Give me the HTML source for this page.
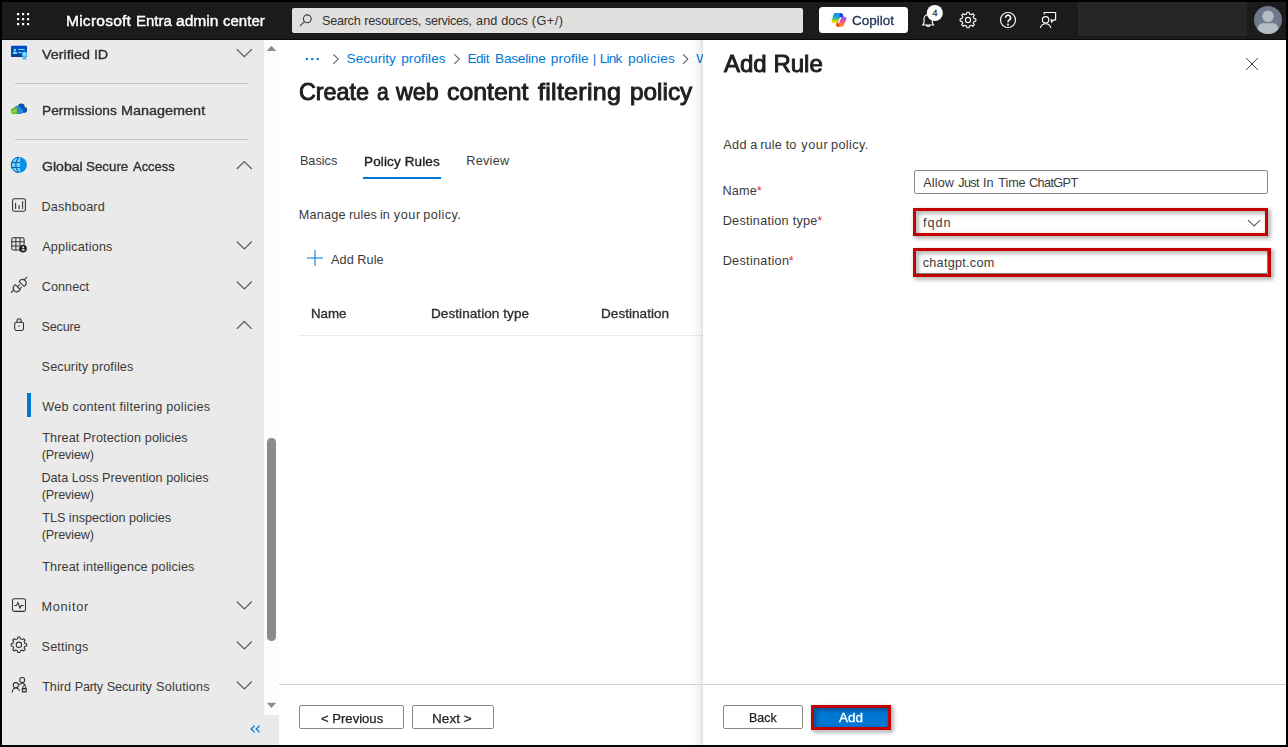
<!DOCTYPE html>
<html lang="en">
<head>
<meta charset="utf-8">
<title>Microsoft Entra admin center</title>
<style>
*{box-sizing:border-box;margin:0;padding:0}
html,body{width:1288px;height:747px;overflow:hidden;background:#000}
body{font-family:"Liberation Sans",sans-serif;font-size:13px;color:#323130;position:relative}
.a{position:absolute}
.t{position:absolute;white-space:nowrap;line-height:1}
svg{position:absolute;overflow:visible}
#white{left:2px;top:2px;width:1284px;height:743px;background:#fff}
#hdr{left:2px;top:2px;width:1284px;height:38px;background:#1b1b1b;border-bottom:1px solid #0a0a0a}
#search{left:292px;top:7.5px;width:511px;height:25.2px;background:#e2e0de;border-radius:2px}
#copilot{left:819px;top:6.7px;width:89.2px;height:26.2px;background:#fff;border-radius:3.5px}
#acct{left:1078px;top:2px;width:169px;height:34px;background:#262626}
#side{left:2px;top:40px;width:277px;height:705px;background:#eaeaea}
#track{left:264px;top:40px;width:15px;height:674.5px;background:#fcfcfc}
#thumb{left:267.4px;top:438px;width:8.6px;height:203.4px;background:#8b8b8b;border-radius:4.3px}
.hr{height:1px;background:#c8c6c4}
#sel{left:27px;top:393px;width:4px;height:24px;background:#0078d4}
#tabline{left:363px;top:177px;width:78px;height:2px;background:#0078d4}
#tblline{left:299px;top:335px;width:404px;height:1px;background:#edebe9}
#footline{left:279px;top:684px;width:1007px;height:1px;background:#d2d0ce}
#pshadow{left:687px;top:40px;width:16px;height:705px;background:linear-gradient(to right,rgba(0,0,0,0) 0%,rgba(0,0,0,.015) 45%,rgba(0,0,0,.05) 80%,rgba(0,0,0,.12) 100%)}
#panel{left:703px;top:40px;width:583px;height:705px;background:#fff}
.inp{background:#fff;border:1px solid #8a8886;border-radius:2px}
.red{border:3px solid #c40000;filter:drop-shadow(2.5px 2.5px 2px rgba(0,0,0,.45))}
.btn{border:1px solid #8a8886;border-radius:2px;background:#fff}
</style>
</head>
<body>
<div class="a" id="white"></div>

<!-- main content (under panel) -->
<div class="a" id="tabline"></div>
<div class="a" id="tblline"></div>
<svg width="720" height="300" viewBox="0 0 720 300" style="left:0;top:0">
  <g fill="#0078d4"><rect x="305.9" y="58" width="2.1" height="2.1"/><rect x="311.2" y="58" width="2.1" height="2.1"/><rect x="316.7" y="58" width="2.1" height="2.1"/></g>
  <g fill="none" stroke="#605e5c" stroke-width="1.05">
    <path d="M333.3 54.3 L338.2 59.05 L333.3 63.8"/>
    <path d="M454.4 54.3 L459.3 59.05 L454.4 63.8"/>
    <path d="M683 54.3 L687.9 59.05 L683 63.8"/>
  </g>
  <path d="M315 250 L315 266 M307 258 L323 258" fill="none" stroke="#0078d4" stroke-width="1.05"/>
</svg>
<span class="t" style="left:696.3px;top:52.4px;font-size:13.65px;color:#0078d4">Web content filtering policies</span>


<!-- header -->
<div class="a" id="hdr"></div>
<div class="a" id="search"></div>
<div class="a" id="copilot"></div>
<div class="a" id="acct"></div>
<svg width="1288" height="42" viewBox="0 0 1288 42" style="left:0;top:0">
  <defs>
    <linearGradient id="cpL" x1="0" y1="0" x2="0" y2="1">
      <stop offset="0" stop-color="#1a8ff5"/><stop offset=".35" stop-color="#16a5d8"/><stop offset=".65" stop-color="#4fc46a"/><stop offset="1" stop-color="#f2d100"/>
    </linearGradient>
    <linearGradient id="cpR" x1="0" y1="0" x2="0" y2="1">
      <stop offset="0" stop-color="#9d55f7"/><stop offset=".45" stop-color="#ec4f8f"/><stop offset="1" stop-color="#ff8a2a"/>
    </linearGradient>
  </defs>
  <!-- waffle -->
  <g fill="#fff">
    <rect x="17" y="13" width="2.2" height="2.2"/><rect x="22" y="13" width="2.2" height="2.2"/><rect x="27" y="13" width="2.2" height="2.2"/>
    <rect x="17" y="18" width="2.2" height="2.2"/><rect x="22" y="18" width="2.2" height="2.2"/><rect x="27" y="18" width="2.2" height="2.2"/>
    <rect x="17" y="23" width="2.2" height="2.2"/><rect x="22" y="23" width="2.2" height="2.2"/><rect x="27" y="23" width="2.2" height="2.2"/>
  </g>
  <!-- search icon -->
  <g fill="none" stroke="#3b3a39" stroke-width="1.1" stroke-linecap="round">
    <circle cx="307.3" cy="18.8" r="3.9"/>
    <path d="M304.5 21.7 L300.2 25.6"/>
  </g>
  <!-- copilot logo -->
  <g stroke-linejoin="round" stroke-width="3">
    <path d="M841.2 15.2 L846 18 L843.5 25 Q843.2 25.6 842.3 25.6 L837.2 25.6 Z" fill="#1447d9" stroke="none" opacity="0"/>
    <path d="M835.3 14.8 L841.3 14.8 L838.2 21.2 L833.2 21.2 Z" fill="url(#cpL)" stroke="url(#cpL)" stroke-width="3.4"/>
    <path d="M840.2 14.2 Q842.6 14.4 843 17.4 L840.6 17.4 Z" fill="#1540d8" stroke="#1540d8" stroke-width="1.2"/>
    <path d="M841.8 18.4 L844.8 18.4 L842 25 L837.6 25 Z" fill="url(#cpR)" stroke="url(#cpR)" stroke-width="3.4"/>
    <path d="M836.4 24 Q836.6 26.3 838.6 26.5 L838.8 24 Z" fill="#ff4a1f" stroke="#ff4a1f" stroke-width="1.2"/>
    <path d="M840.5 17.9 L838.5 22.6" stroke="#fff" stroke-width="1.3" stroke-linecap="round" fill="none"/>
  </g>
  <!-- bell -->
  <g fill="none" stroke="#fff" stroke-width="1.15" stroke-linejoin="round" stroke-linecap="round">
    <path d="M922.6 25 L933.8 25 L932.4 23 L932.4 18.8 A4.2 4.2 0 0 0 924 18.8 L924 23 Z"/>
    <path d="M926.6 25.3 A1.7 1.7 0 0 0 929.8 25.3"/>
  </g>
  <circle cx="934.8" cy="13" r="8" fill="#fff"/>
  <!-- gear -->
  <g fill="none" stroke="#fff" stroke-width="1.1" stroke-linejoin="round">
    <path d="M966.58 14.07 L966.89 12.18 L969.11 12.18 L969.42 14.07 L971.19 14.80 L972.74 13.68 L974.32 15.26 L973.20 16.81 L973.93 18.58 L975.82 18.89 L975.82 21.11 L973.93 21.42 L973.20 23.19 L974.32 24.74 L972.74 26.32 L971.19 25.20 L969.42 25.93 L969.11 27.82 L966.89 27.82 L966.58 25.93 L964.81 25.20 L963.26 26.32 L961.68 24.74 L962.80 23.19 L962.07 21.42 L960.18 21.11 L960.18 18.89 L962.07 18.58 L962.80 16.81 L961.68 15.26 L963.26 13.68 L964.81 14.80 Z"/>
    <circle cx="968" cy="20" r="2.6"/>
  </g>
  <!-- help -->
  <circle cx="1008" cy="20" r="7.5" fill="none" stroke="#fff" stroke-width="1.15"/>
  <path d="M1005.6 17.8 A2.5 2.5 0 1 1 1009.2 20 Q1008 20.7 1008 22.2" fill="none" stroke="#fff" stroke-width="1.6"/>
  <circle cx="1008" cy="24.4" r="1" fill="#fff"/>
  <!-- feedback -->
  <g fill="none" stroke="#fff" stroke-width="1.15" stroke-linejoin="miter">
    <circle cx="1045.6" cy="19.8" r="3.2"/>
    <path d="M1040.4 28 A5.3 5.3 0 0 1 1050.8 28"/>
    <path d="M1044.2 14.6 L1044.2 12.5 L1055.6 12.5 L1055.6 19.8 L1053.8 19.8 L1051.6 22 L1051.6 19.8 L1050.4 19.8"/>
  </g>
  <!-- avatar -->
  <circle cx="1268" cy="20" r="14" fill="#6c7a8c"/>
  <clipPath id="avc"><circle cx="1268" cy="20" r="14"/></clipPath>
  <g clip-path="url(#avc)" fill="#b6bcc3">
    <circle cx="1268" cy="16.3" r="5.8"/>
    <path d="M1257.6 31 Q1257.6 23.2 1262.6 23.2 L1273.4 23.2 Q1278.4 23.2 1278.4 31 L1278.4 36 L1257.6 36 Z"/>
  </g>
</svg>


<!-- sidebar -->
<div class="a" id="side"></div>
<div class="a" id="track"></div>
<div class="a" id="thumb"></div>
<div class="a hr" style="left:15px;top:83px;width:233px"></div>
<div class="a hr" style="left:15px;top:139px;width:233px"></div>
<div class="a" id="sel"></div>
<svg width="280" height="747" viewBox="0 0 280 747" style="left:0;top:0">
<defs>
<linearGradient id="vidg" x1="0" y1="0" x2="0" y2="1"><stop offset="0" stop-color="#0046c7"/><stop offset=".6" stop-color="#0a48b8"/><stop offset="1" stop-color="#0d3a80"/></linearGradient>
<linearGradient id="ribg" x1="0" y1="0" x2="0" y2="1"><stop offset="0" stop-color="#6ad3ff"/><stop offset="1" stop-color="#1ca0f2"/></linearGradient>
<clipPath id="glc"><circle cx="18.9" cy="164.9" r="8"/></clipPath>
</defs>
<path d="M236.8 49.3 L244.3 56.7 L251.8 49.3" fill="none" stroke="#605e5c" stroke-width="1.25"/>
<path d="M236.8 169.0 L244.3 161.60000000000002 L251.8 169.0" fill="none" stroke="#605e5c" stroke-width="1.25"/>
<path d="M236.8 241.5 L244.3 248.89999999999998 L251.8 241.5" fill="none" stroke="#605e5c" stroke-width="1.25"/>
<path d="M236.8 281.5 L244.3 288.9 L251.8 281.5" fill="none" stroke="#605e5c" stroke-width="1.25"/>
<path d="M236.8 328.9 L244.3 321.5 L251.8 328.9" fill="none" stroke="#605e5c" stroke-width="1.25"/>
<path d="M236.8 601.5 L244.3 608.9000000000001 L251.8 601.5" fill="none" stroke="#605e5c" stroke-width="1.25"/>
<path d="M236.8 641.5 L244.3 648.9000000000001 L251.8 641.5" fill="none" stroke="#605e5c" stroke-width="1.25"/>
<path d="M236.8 681.5 L244.3 688.9000000000001 L251.8 681.5" fill="none" stroke="#605e5c" stroke-width="1.25"/>
<path d="M266.8 51 L271.5 45.8 L276.2 51 Z" fill="#8b8b8b"/>
<path d="M266.8 702.8 L271.5 708 L276.2 702.8 Z" fill="#8b8b8b"/>
<path d="M254.6 725.6 L251.2 729 L254.6 732.4 M259.6 725.6 L256.2 729 L259.6 732.4" fill="none" stroke="#0078d4" stroke-width="1.3"/>
<rect x="11" y="45.8" width="16" height="11.1" rx=".7" fill="url(#vidg)"/>
<g fill="#5fe3ff"><circle cx="14.9" cy="49.9" r="1.25"/><path d="M12.5 53.9 Q12.7 51.6 14.9 51.6 Q17.1 51.6 17.3 53.9 Z"/><rect x="18.2" y="48.9" width="6.6" height="1.1"/><rect x="18.2" y="52" width="3.6" height="1.1"/></g>
<path d="M23 55.5 L22.7 60 L24.5 58.9 L26.3 60 L26 55.5 Z" fill="url(#ribg)"/>
<circle cx="24.5" cy="54.3" r="2.7" fill="#4cc2fb"/><circle cx="24.5" cy="54.3" r="1.5" fill="#8fe0ff"/>
<g fill="#0058a8"><circle cx="21.3" cy="106.8" r="3.3"/><circle cx="24.3" cy="109.9" r="2.8"/><rect x="19" y="108" width="5.5" height="4.6"/></g>
<g fill="#2a88e0"><circle cx="17.3" cy="108.7" r="3"/><circle cx="20.3" cy="111.2" r="2.8"/><rect x="14" y="109.5" width="6.5" height="4.5" rx="1"/></g>
<path d="M17 107.9 A3.15 3.15 0 1 0 17 113.9 Z" fill="#6ebf20"/><circle cx="14.2" cy="110.9" r="3.15" fill="#6ebf20" clip-path="none" opacity="0"/>
<path d="M11 110.9 A3.1 3.1 0 0 1 17 109.6 L17 112.2 A3.1 3.1 0 0 1 11 110.9 Z" fill="#6ebf20"/>
<path d="M12.6 111.2 L13.7 112.3 L15.9 109.8" fill="none" stroke="#d6f0b0" stroke-width=".8"/>
<circle cx="18.9" cy="164.9" r="8" fill="#0a8fe8"/>
<g clip-path="url(#glc)"><rect x="10" y="156" width="10.1" height="18" fill="#5fdcff"/><g fill="none" stroke="#2257a8" stroke-width="1.05"><path d="M11 162.5 L20.1 162.5 M11 167.4 L20.1 167.4"/><path d="M18.9 156.9 Q12.6 164.9 18.9 172.9"/></g></g>
<path d="M18.9 157.3 A7.6 7.6 0 0 0 18.9 172.5" fill="none" stroke="#2257a8" stroke-width="1"/>
<g fill="none" stroke="#323130" stroke-width="1.05" stroke-linejoin="round" stroke-linecap="round" stroke="#252423" stroke-width="1.2"><rect x="12.6" y="198.8" width="12.8" height="12.4" rx="1.8"/><path d="M15.6 203.2 L15.6 208.4 M22.6 201.4 L22.6 208.4"/><path d="M19.1 205.2 L19.1 208.9" stroke="#6a6866" stroke-width="1.7" stroke-linecap="butt"/></g>
<g fill="none" stroke="#323130" stroke-width="1.05" stroke-linejoin="round" stroke-linecap="round" stroke-width=".85"><path d="M20.5 250 L13.3 250 Q11.8 250 11.8 248.5 L11.8 239.3 Q11.8 237.8 13.3 237.8 L22.6 237.8 Q24.1 237.8 24.1 239.3 L24.1 244"/><path d="M11.8 241.8 L24.1 241.8 M11.8 245.9 L19.5 245.9 M15.9 237.8 L15.9 250 M20 237.8 L20 245"/></g>
<circle cx="23" cy="248.6" r="3.9" fill="#252423"/><circle cx="23.2" cy="247.3" r="1" fill="#eaeaea"/><path d="M21.6 250.6 Q21.6 248.7 23.2 248.7 Q24.8 248.7 24.8 250.6 Z" fill="#eaeaea"/>
<g fill="none" stroke="#323130" stroke-width="1.05" stroke-linejoin="round" stroke-linecap="round"><path d="M11.3 292.4 L14 289.9 M24 280.2 L26.8 277.4 M17.6 286.6 L19.4 284.8 M19.8 288.8 L21.6 287"/><path d="M15.3 284.7 L20.2 289.7 L18.9 291 Q16.6 292.9 14.3 290.8 L14.1 290.6 Q12 288.3 13.9 286 Z"/><path d="M19.6 282.5 L24.5 287.4 L25.8 286 Q27.7 283.7 25.6 281.4 L25.4 281.2 Q23.1 279.2 20.8 281.1 Z" transform="translate(-0.4,-0.9)"/></g>
<g fill="none" stroke="#323130" stroke-width="1.05" stroke-linejoin="round" stroke-linecap="round"><rect x="14.7" y="322.2" width="8.8" height="8.2" rx="1.6"/><path d="M17 322.2 L17 320.9 A2.1 2.1 0 0 1 21.2 320.9 L21.2 322.2"/></g><rect x="18.5" y="325.6" width="1.2" height="1.2" fill="#323130"/>
<g fill="none" stroke="#323130" stroke-width="1.05" stroke-linejoin="round" stroke-linecap="round"><rect x="12.5" y="598.8" width="13" height="12.6" rx="1.8"/><path d="M14.8 605.4 L16.6 605.4 L17.9 602.4 L20 608.2 L21.2 605.4 L23.2 605.4"/></g>
<g fill="none" stroke="#323130" stroke-width="1.05" stroke-linejoin="round" stroke-linecap="round" stroke-width="1"><path d="M17.48 638.87 L17.80 637.08 L20.00 637.08 L20.32 638.87 L22.09 639.60 L23.58 638.56 L25.14 640.12 L24.10 641.61 L24.83 643.38 L26.62 643.70 L26.62 645.90 L24.83 646.22 L24.10 647.99 L25.14 649.48 L23.58 651.04 L22.09 650.00 L20.32 650.73 L20.00 652.52 L17.80 652.52 L17.48 650.73 L15.71 650.00 L14.22 651.04 L12.66 649.48 L13.70 647.99 L12.97 646.22 L11.18 645.90 L11.18 643.70 L12.97 643.38 L13.70 641.61 L12.66 640.12 L14.22 638.56 L15.71 639.60 Z"/><circle cx="18.9" cy="644.8" r="2.7"/></g>
<g fill="none" stroke="#323130" stroke-width="1.05" stroke-linejoin="round" stroke-linecap="round"><circle cx="22.2" cy="679.9" r="2.5"/><circle cx="15.8" cy="685.2" r="2.6"/><path d="M12.2 692.2 Q12.6 688 15.8 688 Q18.4 688 19.4 690.6"/><path d="M19.6 684.6 Q20.6 683.2 22.2 683.2 Q24.2 683.2 25.2 685.2"/></g>
<rect x="21.8" y="687.8" width="5" height="4.6" rx=".6" fill="#323130"/><rect x="23" y="689.4" width="2.6" height="1.8" fill="#eaeaea"/><path d="M22.9 687.8 L22.9 686.9 A1.4 1.4 0 0 1 25.7 686.9 L25.7 687.8" fill="none" stroke="#323130" stroke-width=".9"/>
</svg>

<!-- panel -->
<div class="a" id="pshadow"></div>
<div class="a" id="panel"></div>
<div class="a" id="footline"></div>
<div class="a btn" style="left:299px;top:705px;width:105px;height:24px"></div>
<div class="a btn" style="left:412px;top:705px;width:82px;height:24px"></div>
<div class="a inp" style="left:914px;top:170px;width:354px;height:23.5px"></div>
<div class="a inp" style="left:914px;top:210px;width:354px;height:24px"></div>
<div class="a inp" style="left:914px;top:250px;width:354px;height:24px"></div>
<div class="a red" style="left:913px;top:208px;width:355px;height:28px"></div>
<div class="a red" style="left:913px;top:248px;width:358px;height:28.8px"></div>
<div class="a btn" style="left:723.3px;top:705px;width:79.5px;height:24px"></div>
<div class="a" style="left:813px;top:707px;width:76px;height:21px;background:#0078d4"></div>
<div class="a red" style="left:811.3px;top:705.3px;width:79.7px;height:24.5px"></div>
<svg width="1288" height="300" viewBox="0 0 1288 300" style="left:0;top:0">
  <path d="M1246.2 58.2 L1257.8 69.8 M1257.8 58.2 L1246.2 69.8" fill="none" stroke="#323130" stroke-width=".95"/>
  <path d="M1248 220.2 L1254.1 226 L1260.2 220.2" fill="none" stroke="#605e5c" stroke-width="1.1"/>
</svg>


<div><span class="t" style="left:66.43px;top:14.0px;font-size:14.625px;color:#ffffff;letter-spacing:0.177px;-webkit-text-stroke:0.39px #ffffff;transform:scaleX(1.0700);transform-origin:0 50%;">Microsoft</span> <span class="t" style="left:135.77px;top:14.0px;font-size:14.625px;color:#ffffff;-webkit-text-stroke:0.39px #ffffff;transform:scaleX(1.0255);transform-origin:0 50%;">Entra</span> <span class="t" style="left:175.92px;top:14.0px;font-size:14.625px;color:#ffffff;-webkit-text-stroke:0.39px #ffffff;transform:scaleX(1.0685);transform-origin:0 50%;">admin</span> <span class="t" style="left:222.96px;top:14.0px;font-size:14.625px;color:#ffffff;-webkit-text-stroke:0.39px #ffffff;transform:scaleX(1.0286);transform-origin:0 50%;">center</span></div>
<div><span class="t" style="left:322.01px;top:15.0px;font-size:12.674999999999999px;color:#323130;letter-spacing:-0.285px;">Search</span> <span class="t" style="left:364.25px;top:15.0px;font-size:12.674999999999999px;color:#323130;letter-spacing:-0.227px;">resources,</span> <span class="t" style="left:425.08px;top:15.0px;font-size:12.674999999999999px;color:#323130;letter-spacing:-0.372px;">services,</span> <span class="t" style="left:476.10px;top:15.0px;font-size:12.674999999999999px;color:#323130;letter-spacing:0.095px;">and</span> <span class="t" style="left:501.21px;top:15.0px;font-size:12.674999999999999px;color:#323130;letter-spacing:-0.070px;">docs</span> <span class="t" style="left:531.76px;top:15.0px;font-size:12.674999999999999px;color:#323130;letter-spacing:0.482px;">(G+/)</span></div>
<div><span class="t" style="left:852.28px;top:15.0px;font-size:12.674999999999999px;color:#243a5e;-webkit-text-stroke:0.34px #243a5e;transform:scaleX(1.0669);transform-origin:0 50%;">Copilot</span></div>
<div><span class="t" style="left:932.18px;top:8.0px;font-size:9.6px;color:#1d3158;-webkit-text-stroke:0.26px #1d3158;">4</span></div>
<div><span class="t" style="left:42.40px;top:48.0px;font-size:13.65px;color:#323130;-webkit-text-stroke:0.37px #323130;transform:scaleX(1.0527);transform-origin:0 50%;">Verified ID</span></div>
<div><span class="t" style="left:41.91px;top:104.0px;font-size:13.65px;color:#323130;-webkit-text-stroke:0.37px #323130;transform:scaleX(1.0066);transform-origin:0 50%;">Permissions</span> <span class="t" style="left:120.68px;top:104.0px;font-size:13.65px;color:#323130;-webkit-text-stroke:0.37px #323130;transform:scaleX(1.0568);transform-origin:0 50%;">Management</span></div>
<div><span class="t" style="left:41.87px;top:160.0px;font-size:13.65px;color:#323130;-webkit-text-stroke:0.37px #323130;transform:scaleX(1.0315);transform-origin:0 50%;">Global</span> <span class="t" style="left:86.44px;top:160.0px;font-size:13.65px;color:#323130;-webkit-text-stroke:0.37px #323130;transform:scaleX(0.9781);transform-origin:0 50%;">Secure</span> <span class="t" style="left:133.10px;top:160.0px;font-size:13.65px;color:#323130;-webkit-text-stroke:0.37px #323130;transform:scaleX(0.9492);transform-origin:0 50%;">Access</span></div>
<div><span class="t" style="left:41.40px;top:201.0px;font-size:12.674999999999999px;color:#3b3a39;letter-spacing:0.186px;">Dashboard</span></div>
<div><span class="t" style="left:42.26px;top:241.0px;font-size:12.674999999999999px;color:#3b3a39;letter-spacing:0.176px;">Applications</span></div>
<div><span class="t" style="left:41.80px;top:281.0px;font-size:12.674999999999999px;color:#3b3a39;letter-spacing:0.033px;">Connect</span></div>
<div><span class="t" style="left:41.61px;top:321.0px;font-size:12.674999999999999px;color:#3b3a39;letter-spacing:-0.254px;">Secure</span></div>
<div><span class="t" style="left:41.61px;top:361.0px;font-size:12.674999999999999px;color:#3b3a39;letter-spacing:0.101px;">Security profiles</span></div>
<div><span class="t" style="left:42.30px;top:401.0px;font-size:12.674999999999999px;color:#3b3a39;letter-spacing:0.242px;">Web content filtering policies</span></div>
<div><span class="t" style="left:42.23px;top:432.0px;font-size:12.674999999999999px;color:#3b3a39;letter-spacing:0.107px;">Threat Protection policies</span></div>
<div><span class="t" style="left:41.66px;top:449.0px;font-size:12.674999999999999px;color:#3b3a39;letter-spacing:-0.129px;">(Preview)</span></div>
<div><span class="t" style="left:41.40px;top:472.0px;font-size:12.674999999999999px;color:#3b3a39;letter-spacing:0.014px;">Data Loss Prevention policies</span></div>
<div><span class="t" style="left:41.66px;top:489.0px;font-size:12.674999999999999px;color:#3b3a39;letter-spacing:-0.129px;">(Preview)</span></div>
<div><span class="t" style="left:42.23px;top:512.0px;font-size:12.674999999999999px;color:#3b3a39;letter-spacing:-0.024px;">TLS inspection policies</span></div>
<div><span class="t" style="left:41.66px;top:529.0px;font-size:12.674999999999999px;color:#3b3a39;letter-spacing:-0.129px;">(Preview)</span></div>
<div><span class="t" style="left:42.23px;top:561.0px;font-size:12.674999999999999px;color:#3b3a39;letter-spacing:0.111px;">Threat intelligence policies</span></div>
<div><span class="t" style="left:41.40px;top:601.0px;font-size:12.674999999999999px;color:#3b3a39;letter-spacing:0.767px;">Monitor</span></div>
<div><span class="t" style="left:41.61px;top:641.0px;font-size:12.674999999999999px;color:#3b3a39;letter-spacing:0.126px;">Settings</span></div>
<div><span class="t" style="left:42.13px;top:681.0px;font-size:12.674999999999999px;color:#3b3a39;letter-spacing:0.016px;">Third</span> <span class="t" style="left:74.80px;top:681.0px;font-size:12.674999999999999px;color:#3b3a39;letter-spacing:-0.316px;">Party</span> <span class="t" style="left:106.72px;top:681.0px;font-size:12.674999999999999px;color:#3b3a39;letter-spacing:-0.079px;">Security</span> <span class="t" style="left:156.12px;top:681.0px;font-size:12.674999999999999px;color:#3b3a39;letter-spacing:0.177px;">Solutions</span></div>
<div><span class="t" style="left:346.60px;top:52.0px;font-size:13.65px;color:#0078d4;">Security</span> <span class="t" style="left:401.21px;top:52.0px;font-size:13.65px;color:#0078d4;letter-spacing:0.064px;">profiles</span></div>
<div><span class="t" style="left:467.39px;top:52.0px;font-size:13.65px;color:#0078d4;letter-spacing:-0.482px;">Edit</span> <span class="t" style="left:495.00px;top:52.0px;font-size:13.65px;color:#0078d4;letter-spacing:-0.221px;">Baseline</span> <span class="t" style="left:550.82px;top:52.0px;font-size:13.65px;color:#0078d4;letter-spacing:0.118px;">profile</span> <span class="t" style="left:592.65px;top:52.0px;font-size:13.65px;color:#0078d4;">|</span> <span class="t" style="left:599.79px;top:52.0px;font-size:13.65px;color:#0078d4;letter-spacing:-0.802px;">Link</span> <span class="t" style="left:627.92px;top:52.0px;font-size:13.65px;color:#0078d4;letter-spacing:0.194px;">policies</span></div>
<div><span class="t" style="left:299.16px;top:80.6px;font-size:23.4px;color:#201f1e;-webkit-text-stroke:0.95px #201f1e;transform:scaleX(0.9950);transform-origin:0 50%;">Create</span> <span class="t" style="left:376.50px;top:80.6px;font-size:23.4px;color:#201f1e;-webkit-text-stroke:0.95px #201f1e;transform:scaleX(0.9000);transform-origin:0 50%;">a</span> <span class="t" style="left:396.21px;top:80.6px;font-size:23.4px;color:#201f1e;-webkit-text-stroke:0.95px #201f1e;transform:scaleX(0.9928);transform-origin:0 50%;">web</span> <span class="t" style="left:446.76px;top:80.6px;font-size:23.4px;color:#201f1e;-webkit-text-stroke:0.95px #201f1e;transform:scaleX(1.0603);transform-origin:0 50%;">content</span> <span class="t" style="left:538.47px;top:80.6px;font-size:23.4px;color:#201f1e;letter-spacing:0.255px;-webkit-text-stroke:0.95px #201f1e;transform:scaleX(1.0700);transform-origin:0 50%;">filtering</span> <span class="t" style="left:629.96px;top:80.6px;font-size:23.4px;color:#201f1e;-webkit-text-stroke:0.95px #201f1e;transform:scaleX(1.0405);transform-origin:0 50%;">policy</span></div>
<div><span class="t" style="left:299.90px;top:155.0px;font-size:12.674999999999999px;color:#3b3a39;letter-spacing:0.020px;">Basics</span></div>
<div><span class="t" style="left:363.62px;top:156.0px;font-size:12.674999999999999px;color:#201f1e;letter-spacing:0.106px;-webkit-text-stroke:0.34px #201f1e;transform:scaleX(1.0700);transform-origin:0 50%;">Policy Rules</span></div>
<div><span class="t" style="left:466.20px;top:155.0px;font-size:12.674999999999999px;color:#3b3a39;letter-spacing:0.302px;">Review</span></div>
<div><span class="t" style="left:298.80px;top:209.0px;font-size:12.674999999999999px;color:#3b3a39;letter-spacing:0.202px;">Manage</span> <span class="t" style="left:349.05px;top:209.0px;font-size:12.674999999999999px;color:#3b3a39;letter-spacing:0.089px;">rules</span> <span class="t" style="left:380.06px;top:209.0px;font-size:12.674999999999999px;color:#3b3a39;">in</span> <span class="t" style="left:393.67px;top:209.0px;font-size:12.674999999999999px;color:#3b3a39;letter-spacing:0.667px;">your</span> <span class="t" style="left:423.37px;top:209.0px;font-size:12.674999999999999px;color:#3b3a39;letter-spacing:0.406px;">policy.</span></div>
<div><span class="t" style="left:331.06px;top:254.0px;font-size:12.674999999999999px;color:#3b3a39;letter-spacing:0.069px;">Add Rule</span></div>
<div><span class="t" style="left:310.63px;top:308.0px;font-size:12.674999999999999px;color:#323130;-webkit-text-stroke:0.34px #323130;transform:scaleX(1.0514);transform-origin:0 50%;">Name</span></div>
<div><span class="t" style="left:430.52px;top:308.0px;font-size:12.674999999999999px;color:#323130;letter-spacing:0.056px;-webkit-text-stroke:0.34px #323130;transform:scaleX(1.0700);transform-origin:0 50%;">Destination type</span></div>
<div><span class="t" style="left:600.72px;top:308.0px;font-size:12.674999999999999px;color:#323130;letter-spacing:0.035px;-webkit-text-stroke:0.34px #323130;transform:scaleX(1.0700);transform-origin:0 50%;">Destination</span></div>
<div><span class="t" style="left:320.99px;top:713.0px;font-size:12.674999999999999px;color:#201f1e;-webkit-text-stroke:0.25px #201f1e;transform:scaleX(1.0337);transform-origin:0 50%;">&lt; Previous</span></div>
<div><span class="t" style="left:432.49px;top:713.0px;font-size:12.674999999999999px;color:#201f1e;letter-spacing:0.040px;-webkit-text-stroke:0.25px #201f1e;transform:scaleX(1.0700);transform-origin:0 50%;">Next &gt;</span></div>
<div><span class="t" style="left:723.87px;top:52.6px;font-size:23.4px;color:#201f1e;-webkit-text-stroke:0.95px #201f1e;transform:scaleX(1.0264);transform-origin:0 50%;">Add Rule</span></div>
<div><span class="t" style="left:723.16px;top:139.0px;font-size:12.674999999999999px;color:#3b3a39;letter-spacing:0.460px;">Add</span> <span class="t" style="left:750.20px;top:139.0px;font-size:12.674999999999999px;color:#3b3a39;">a</span> <span class="t" style="left:760.25px;top:139.0px;font-size:12.674999999999999px;color:#3b3a39;letter-spacing:0.133px;">rule</span> <span class="t" style="left:785.66px;top:139.0px;font-size:12.674999999999999px;color:#3b3a39;">to</span> <span class="t" style="left:801.37px;top:139.0px;font-size:12.674999999999999px;color:#3b3a39;letter-spacing:0.567px;">your</span> <span class="t" style="left:830.97px;top:139.0px;font-size:12.674999999999999px;color:#3b3a39;letter-spacing:0.389px;">policy.</span></div>
<div><span class="t" style="left:722.50px;top:185.0px;font-size:12.674999999999999px;color:#3b3a39;letter-spacing:0.170px;">Name</span></div>
<div><span class="t" style="left:756.66px;top:185.0px;font-size:12.674999999999999px;color:#e5283c;">*</span></div>
<div><span class="t" style="left:722.70px;top:215.0px;font-size:12.674999999999999px;color:#3b3a39;letter-spacing:0.261px;">Destination type</span></div>
<div><span class="t" style="left:817.25px;top:215.0px;font-size:12.674999999999999px;color:#e5283c;">*</span></div>
<div><span class="t" style="left:722.70px;top:255.0px;font-size:12.674999999999999px;color:#3b3a39;letter-spacing:0.292px;">Destination</span></div>
<div><span class="t" style="left:788.66px;top:255.0px;font-size:12.674999999999999px;color:#e5283c;">*</span></div>
<div><span class="t" style="left:923.16px;top:177.0px;font-size:12.674999999999999px;color:#3b3a39;letter-spacing:0.150px;">Allow</span> <span class="t" style="left:958.24px;top:177.0px;font-size:12.674999999999999px;color:#3b3a39;letter-spacing:-0.645px;">Just</span> <span class="t" style="left:983.02px;top:177.0px;font-size:12.674999999999999px;color:#3b3a39;">In</span> <span class="t" style="left:998.24px;top:177.0px;font-size:12.674999999999999px;color:#3b3a39;letter-spacing:-0.078px;">Time</span> <span class="t" style="left:1028.90px;top:177.0px;font-size:12.674999999999999px;color:#3b3a39;letter-spacing:-0.577px;">ChatGPT</span></div>
<div><span class="t" style="left:922.93px;top:217.0px;font-size:12.674999999999999px;color:#3b3a39;letter-spacing:0.983px;">fqdn</span></div>
<div><span class="t" style="left:922.71px;top:257.0px;font-size:12.674999999999999px;color:#3b3a39;letter-spacing:0.258px;">chatgpt.com</span></div>
<div><span class="t" style="left:749.05px;top:712.0px;font-size:12.674999999999999px;color:#201f1e;-webkit-text-stroke:0.25px #201f1e;transform:scaleX(0.9848);transform-origin:0 50%;">Back</span></div>
<div><span class="t" style="left:839.40px;top:712.0px;font-size:12.674999999999999px;color:#ffffff;-webkit-text-stroke:0.34px #ffffff;transform:scaleX(1.0636);transform-origin:0 50%;">Add</span></div>
</body>
</html>
